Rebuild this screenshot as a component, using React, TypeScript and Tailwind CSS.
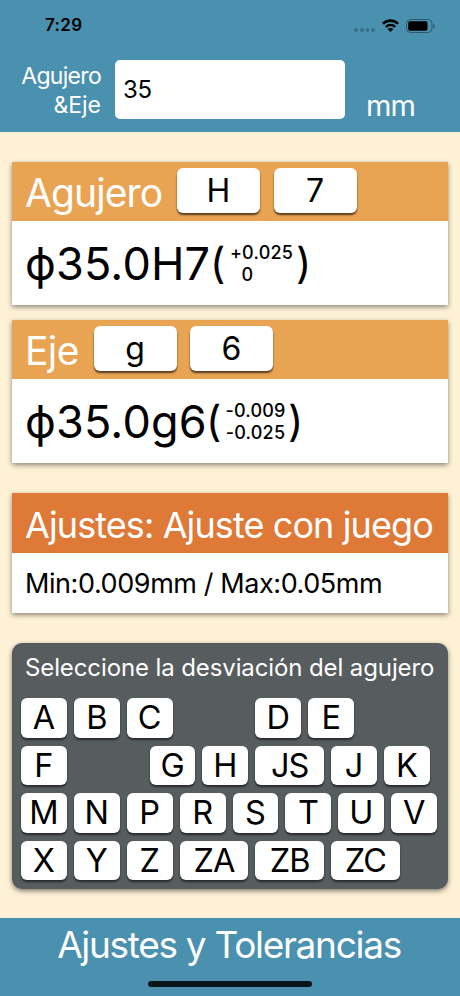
import clsx from "clsx";

const KEY_ROWS = [
  ["A", "B", "C", "CD", "D", "E", "EF"],
  ["F", "FG", "G", "H", "JS", "J", "K"],
  ["M", "N", "P", "R", "S", "T", "U", "V"],
  ["X", "Y", "Z", "ZA", "ZB", "ZC"],
];

// only available for shafts, keep their slot empty
const HIDDEN_KEYS = ["CD", "EF", "FG"];

function StatusBar() {
  return (
    <div className="flex h-[50px] items-center justify-between pl-[45px] pr-[24px] pt-[1px]">
      <span className="text-[17px] font-semibold leading-none tracking-[0.3px]">7:29</span>
      <div className="flex items-center">
        <div className="mr-[6px] mt-[9px] flex gap-[2px]">
          {[0, 1, 2, 3].map((i) => (
            <span key={i} className="size-[3.7px] rounded-full bg-[#387085]" />
          ))}
        </div>
        <svg className="mr-[6px] h-[14px] w-[19px]" viewBox="0 0 19 14" fill="currentColor">
          <path d="M9.5 2.9c2.5 0 4.8 1 6.5 2.6.1.1.3.1.4 0l1.4-1.4c.1-.1.1-.3 0-.4C13.1-.8 5.9-.8 1.2 3.7c-.1.1-.1.3 0 .4l1.4 1.4c.1.1.3.1.4 0C4.7 3.9 7 2.9 9.5 2.9z" />
          <path d="M9.5 7.3c1.3 0 2.6.5 3.6 1.4.1.1.3.1.4 0l1.4-1.4c.1-.1.1-.3 0-.4-3-2.8-7.7-2.8-10.7 0-.1.1-.1.3 0 .4l1.4 1.4c.1.1.3.1.4 0 .9-.9 2.200-1.400 3.500-1.400z" />
          <path d="M12.2 10.3c.1-.1.1-.3 0-.4-1.5-1.3-3.8-1.3-5.4 0-.1.1-.1.3 0 .4l2.500 2.500c.1.1.3.1.4 0z" />
        </svg>
        <svg className="h-[14px] w-[30px]" viewBox="0 0 30 14">
          <rect x=".5" y=".5" width="25.5" height="13" rx="4" fill="none" stroke="#2c5a6c" />
          <rect x="2.2" y="2.3" width="19.3" height="9.4" rx="1.6" fill="#000" />
          <path d="M27.3 4.7c1.900.7 1.900 3.900 0 4.600z" fill="#2c5a6c" />
        </svg>
      </div>
    </div>
  );
}

function SelectButton({ label }: { label: string }) {
  return (
    <button className="h-[45px] w-[83px] rounded-[6px] bg-white text-[32px] leading-[45px] text-black shadow-[0_2px_2px_rgba(0,0,0,0.65)]">
      {label}
    </button>
  );
}

type ToleranceCardProps = {
  title: string;
  titleClass: string;
  letter: string;
  grade: string;
  value: string;
  valueClass: string;
  upper: string;
  lower: string;
  limitsClass: string;
};

function ToleranceCard(props: ToleranceCardProps) {
  return (
    <section className="bg-white shadow-[0_2px_5px_rgba(0,0,0,0.45)]">
      <div className="flex h-[59px] items-start gap-[13.5px] bg-[#e9a453] pl-[13px] pt-[6px]">
        <h2 className={clsx("shrink-0 text-[39px] leading-[49px] text-white", props.titleClass)}>
          {props.title}
        </h2>
        <SelectButton label={props.letter} />
        <SelectButton label={props.grade} />
      </div>
      <div className="flex h-[84px] items-start pl-[13px] pt-[18px]">
        <span className={clsx("shrink-0 text-[45px] leading-[50px] tracking-[0.2px]", props.valueClass)}>
          {props.value}
        </span>
        <span className="w-[18px] text-[42px] leading-[48px]">(</span>
        <span
          className={clsx(
            "flex h-[48px] shrink-0 flex-col pt-[3px] text-center text-[18px] font-medium leading-[22px] tracking-[0.2px]",
            props.limitsClass
          )}
        >
          <span>{props.upper}</span>
          <span>{props.lower}</span>
        </span>
        <span className="ml-[1px] text-[42px] leading-[48px]">)</span>
      </div>
    </section>
  );
}

function Key({ label }: { label: string }) {
  return (
    <button
      className={clsx(
        "h-[39.5px] shrink-0 rounded-[6px] bg-white text-[32.5px] leading-[40.5px] text-black shadow-[0_2px_2px_rgba(0,0,0,0.55)]",
        label.length > 1 ? "w-[68.7px] tracking-[-1px]" : "w-[45.9px]",
        HIDDEN_KEYS.includes(label) && "invisible"
      )}
    >
      {label}
    </button>
  );
}

export default function App() {
  return (
    <div className="flex h-[996px] w-[460px] flex-col overflow-hidden bg-[#fef1d6] font-[Inter,sans-serif] text-black">
      <header className="h-[132px] shrink-0 bg-[#4a90af]">
        <StatusBar />
        <div className="flex h-[82px] pl-[12px]">
          <label className="w-[89px] pt-[12px] text-right text-[23px] leading-[28.5px] tracking-[-0.7px] text-white">
            Agujero
            <br />
            <span className="tracking-[0px]">&amp;Eje</span>
          </label>
          <input
            className="ml-[14px] mt-[10px] h-[59px] w-[230px] rounded-[5px] bg-white pl-[8px] text-[24px] tracking-[-0.3px] outline-none"
            defaultValue="35"
          />
          <span className="ml-[21px] mt-[39px] text-[29px] leading-[34px] tracking-[-1px] text-white">mm</span>
        </div>
      </header>

      <main className="flex-1 px-[12px] pt-[30px]">
        <div className="flex flex-col gap-[15px]">
          <ToleranceCard
            title="Agujero"
            titleClass="w-[138.5px] tracking-[-0.9px]"
            letter="H"
            grade="7"
            value="ϕ35.0H7"
            valueClass="w-[185px]"
            upper="+0.025"
            lower="0"
            limitsClass="w-[67px] [&>span:last-child]:pr-[28px]"
          />
          <ToleranceCard
            title="Eje"
            titleClass="w-[55px] tracking-[-0.6px]"
            letter="g"
            grade="6"
            value="ϕ35.0g6"
            valueClass="w-[181px]"
            upper="-0.009"
            lower="-0.025"
            limitsClass="w-[63px]"
          />
        </div>

        <section className="mt-[30px] bg-white shadow-[0_2px_5px_rgba(0,0,0,0.45)]">
          <h2 className="h-[59.5px] whitespace-nowrap bg-[#de7938] pl-[13px] text-[36px] leading-[64px] tracking-[-0.9px] text-white">
            Ajustes: Ajuste con juego
          </h2>
          <p className="h-[60px] whitespace-nowrap pl-[13px] text-[27px] leading-[61px] tracking-[-0.42px]">
            Min:0.009mm / Max:0.05mm
          </p>
        </section>

        <section className="mt-[30px] h-[246px] rounded-[10px] bg-[#575c5e] px-[9px] shadow-[0_2px_5px_rgba(0,0,0,0.5)]">
          <h3 className="h-[55.5px] whitespace-nowrap pl-[4px] text-[24px] leading-[50px] tracking-[-0.11px] text-white">
            Seleccione la desviación del agujero
          </h3>
          <div className="flex flex-col gap-[8px]">
            {KEY_ROWS.map((row) => (
              <div key={row[0]} className="flex gap-[7px]">
                {row.map((label) => (
                  <Key key={label} label={label} />
                ))}
              </div>
            ))}
          </div>
        </section>
      </main>

      <footer className="flex h-[78px] shrink-0 flex-col items-center bg-[#4a90af]">
        <span className="mr-[2px] whitespace-nowrap text-[37px] leading-[54px] tracking-[-1.3px] text-white">
          Ajustes y Tolerancias
        </span>
        <div className="mt-[9px] h-[6px] w-[164px] rounded-full bg-[#07141a]" />
      </footer>
    </div>
  );
}
